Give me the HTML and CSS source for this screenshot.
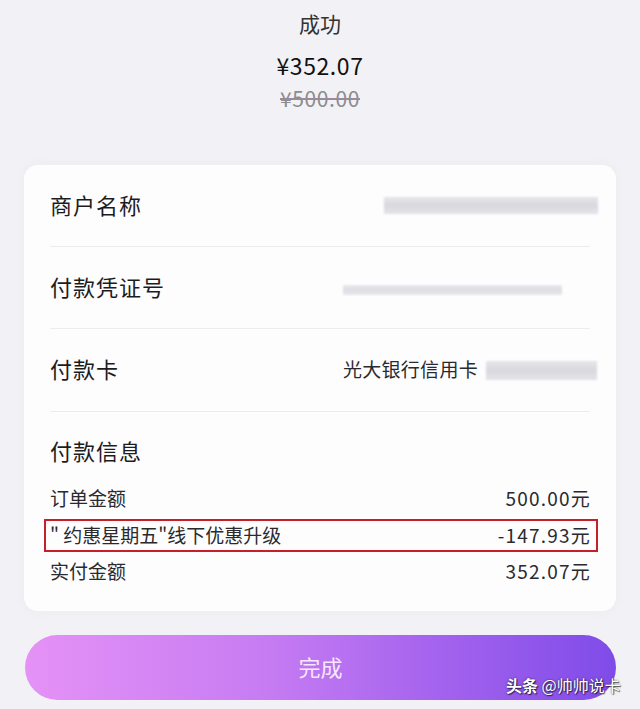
FILE: index.html
```html
<!DOCTYPE html>
<html lang="zh-CN">
<head>
<meta charset="utf-8">
<title>成功</title>
<link rel="stylesheet" href="styles.css">
</head>
<body>
<div class="page">
  <header class="head">
    <div class="status">成功</div>
    <div class="paid">¥352.07</div>
    <div class="orig">¥500.00</div>
  </header>

  <section class="card">
    <div class="row">
      <span class="label">商户名称</span>
      <span class="mask mask-1"></span>
    </div>
    <div class="row">
      <span class="label">付款凭证号</span>
      <span class="mask mask-2"></span>
    </div>
    <div class="row">
      <span class="label">付款卡</span>
      <span class="card-val"><span class="bank">光大银行信用卡</span><span class="mask mask-3"></span></span>
    </div>
    <div class="info">
      <div class="info-title">付款信息</div>
      <div class="sub">
        <span>订单金额</span><span class="num">500.00元</span>
      </div>
      <div class="sub hl">
        <span>" 约惠星期五"线下优惠升级</span><span class="num">-147.93元</span>
      </div>
      <div class="sub">
        <span>实付金额</span><span class="num">352.07元</span>
      </div>
    </div>
  </section>

  <div class="btn">完成</div>

  <div class="wm"><b>头条</b> @帅帅说卡</div>
</div>
</body>
</html>
```

FILE: styles.css
```css
html, body {
  margin: 0;
  padding: 0;
}
body {
  background: #f2f2f6;
  font-family: "Noto Sans CJK SC", "Noto Sans", sans-serif;
  color: #1c1c1e;
}
.page {
  position: relative;
  width: 640px;
  height: 709px;
  overflow: hidden;
}
.head {
  display: flex;
  flex-direction: column;
  align-items: center;
  padding-top: 8px;
  height: 155px;
  box-sizing: border-box;
}
.status {
  font-size: 21px;
  line-height: 30px;
  color: #333;
}
.paid {
  margin-top: 12px;
  font-size: 23px;
  line-height: 30px;
  color: #111;
  letter-spacing: 0.6px;
}
.orig {
  margin-top: 3px;
  font-size: 21px;
  line-height: 30px;
  color: #8c8c8c;
  letter-spacing: 0.6px;
  text-decoration: line-through;
  text-decoration-color: #9a8a9a;
  text-decoration-thickness: 1.5px;
}
.card {
  margin: 10px 24px 0 24px;
  background: #fdfdfe;
  border-radius: 14px;
  padding: 0 26px 21px 26px;
  box-shadow: 0 0 12px rgba(180, 180, 200, 0.12);
}
.row {
  height: 82px;
  display: flex;
  align-items: center;
  justify-content: space-between;
  border-bottom: 1px solid #ececf0;
  box-sizing: border-box;
  padding-bottom: 4px;
}
.row:nth-child(3) {
  height: 83px;
}
.label {
  font-size: 22px;
  color: #1c1c1e;
  letter-spacing: 1px;
}
.mask {
  display: block;
  background: linear-gradient(180deg, #e6e6ea, #d8d8de 50%, #e4e4e8);
  filter: blur(1px);
}
.mask-1 {
  width: 214px;
  height: 17px;
  margin-right: -8px;
  margin-top: 4px;
}
.mask-2 {
  width: 219px;
  height: 10px;
  margin-right: 28px;
  margin-top: 8px;
  opacity: 0.85;
}
.card-val {
  display: flex;
  align-items: center;
  margin-right: -7px;
}
.bank {
  font-size: 19px;
  color: #2a2a2e;
  margin-right: 8px;
  letter-spacing: 0.3px;
}
.mask-3 {
  width: 111px;
  height: 19px;
  margin-top: 4px;
}
.info {
  padding-top: 25px;
}
.info-title {
  font-size: 22px;
  line-height: 26px;
  margin-bottom: 18px;
  letter-spacing: 1px;
}
.sub {
  height: 36px;
  display: flex;
  align-items: center;
  justify-content: space-between;
  font-size: 19px;
  color: #2a2a2e;
  box-sizing: border-box;
  padding-bottom: 4px;
}
.num {
  letter-spacing: 1.2px;
  margin-right: -1px;
}
.hl {
  height: 33px;
  margin: 2px -8px 2px -6px;
  padding: 0 6px 3px 4px;
  border: 2px solid #c81e2c;
}
.btn {
  margin: 24px 24px 0 25px;
  height: 65px;
  border-radius: 33px;
  background: linear-gradient(90deg, #e592f6 0%, #c77cf2 40%, #a463ee 70%, #7f4be8 100%);
  display: flex;
  align-items: center;
  justify-content: center;
  color: #f6e8ff;
  font-size: 22px;
  box-sizing: border-box;
  padding-bottom: 4px;
}
.wm {
  position: absolute;
  left: 506px;
  top: 674px;
  font-size: 16px;
  line-height: 22px;
  color: #fff;
  text-shadow: 0 0 2px rgba(0,0,0,0.7), 1px 1px 1px rgba(0,0,0,0.6);
  white-space: nowrap;
}
.wm b {
  font-weight: 700;
}
```
